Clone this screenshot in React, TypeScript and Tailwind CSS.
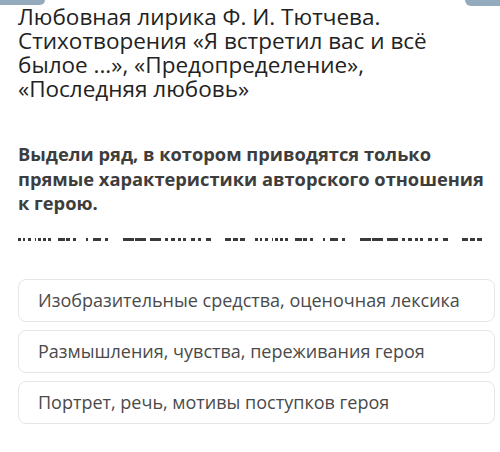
const dashes: [number, number][] = [
  [20, 23], [25, 27], [30, 33], [37, 38], [40, 43], [45, 48], [50, 53],
  [60, 67], [68, 72], [75, 78], [88, 90], [95, 103], [107, 110],
  [125, 136], [137, 148], [152, 163], [167, 170], [173, 177], [180, 183], [185, 188],
  [193, 197], [200, 203], [208, 213], [227, 233], [235, 240], [242, 247],
];

const options = [
  "Изобразительные средства, оценочная лексика",
  "Размышления, чувства, переживания героя",
  "Портрет, речь, мотивы поступков героя",
];

function CutLine() {
  return (
    <svg width="500" height="4" className="block">
      {[0, 237].map((off) =>
        dashes.map(([a, b]) =>
          a + off < 496 ? (
            <rect key={`${off}-${a}`} x={a + off - 2} y={0} width={Math.min(b, 496 - off) - a} height={3} fill="#3a3a3a" />
          ) : null
        )
      )}
    </svg>
  );
}

export default function App() {
  return (
    <div className="relative w-[500px] h-[452px] bg-white overflow-hidden" style={{ fontFamily: '"Open Sans", "Noto Sans", sans-serif' }}>
      {/* cut-off buttons at the top edge */}
      <div className="absolute left-0 top-0 w-[45px] h-[5px] bg-[#93abbd] rounded-br-md" />
      <div className="absolute right-0 top-0 w-[35px] h-[6px] bg-[#93abbd] rounded-bl-md" />

      <div className="px-[18px] pt-[5px]">
        <h1 className="text-[22.5px] leading-[24px] text-[#222] whitespace-nowrap">
          Любовная лирика Ф. И. Тютчева.
          <br />
          Стихотворения «Я встретил вас и всё
          <br />
          былое ...», «Предопределение»,
          <br />
          «Последняя любовь»
        </h1>

        <p className="mt-[41px] text-[18.3px] leading-[24.5px] font-bold text-[#3d3d3d] whitespace-nowrap">
          Выдели ряд, в котором приводятся только
          <br />
          прямые характеристики авторского отношения
          <br />
          к герою.
        </p>
      </div>

      <div className="mt-[22px]">
        <CutLine />
      </div>

      <div className="mt-[37px] pl-[18px] pr-[5px] flex flex-col gap-2">
        {options.map((o) => (
          <div key={o} className="h-[43px] flex items-center px-[19px] border border-[#e6e6e6] rounded-lg text-[18px] text-[#4a4a4a] whitespace-nowrap">
            {o}
          </div>
        ))}
      </div>
    </div>
  );
}
